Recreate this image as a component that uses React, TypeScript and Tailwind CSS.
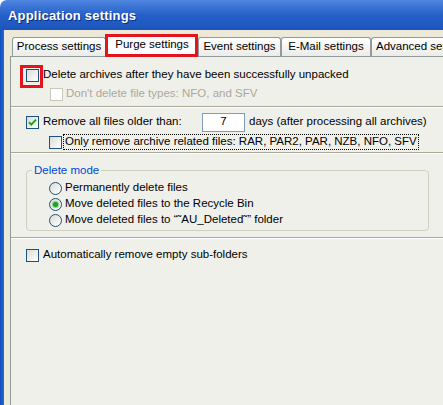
import React from "react";

function Checkbox({ checked = false, disabled = false }: { checked?: boolean; disabled?: boolean }) {
  return (
    <div
      className={
        "w-[13px] h-[13px] shrink-0 border relative " +
        (disabled
          ? "border-[#CAC8BB] bg-white"
          : "border-[#1C5180] bg-gradient-to-br from-[#DCDCD7] to-[#FFFFFF]")
      }
    >
      {checked && (
        <svg className="absolute left-[1px] top-[1px]" width="9" height="9" viewBox="0 0 9 9">
          <path d="M1 4.2 L3.3 6.6 L8 1.6" stroke="#21A121" strokeWidth="2" fill="none" />
        </svg>
      )}
    </div>
  );
}

function Radio({ checked = false }: { checked?: boolean }) {
  return (
    <div className="w-[13px] h-[13px] shrink-0 rounded-full border border-[#1C5180] bg-gradient-to-br from-[#DCDCD7] to-white flex items-center justify-center">
      {checked && <div className="w-[5px] h-[5px] rounded-full bg-[#21A121] shadow-[0_0_1px_1px_#7FD07F]" />}
    </div>
  );
}

function Separator() {
  return <div className="h-[2px] border-t border-[#ACA899] border-b border-b-white" />;
}

function Tab({ label, w, selected = false }: { label: string; w: string; selected?: boolean }) {
  if (selected) {
    return (
      <div className={"relative z-10 h-[23px] -mb-px border border-b-0 border-[#919B9C] rounded-t-[3px] bg-[#FCFCFE] flex items-center justify-center " + w}>
        <span className="-mt-[2px]">{label}</span>
        <div className="absolute -left-[2px] -top-[1px] -right-[1px] h-[23px] border-[3px] border-[#E5131B]" />
      </div>
    );
  }
  return (
    <div className={"h-[19px] border border-b-0 border-[#919B9C] rounded-t-[3px] bg-gradient-to-b from-white to-[#ECEBE6] flex items-center justify-center " + w}>
      <span>{label}</span>
    </div>
  );
}

export default function App() {
  return (
    <div className="w-[443px] h-[405px] overflow-hidden bg-white font-['Liberation_Sans',sans-serif] text-[11.5px] text-black leading-none">
      <div className="w-[540px] h-[405px] flex flex-col">
        {/* Title bar */}
        <div className="h-[30px] shrink-0 rounded-tl-[7px] bg-gradient-to-b from-[#4F86E0] via-[#2560C8] to-[#1B55BC] flex items-center pl-[8px]">
          <span className="text-white font-bold text-[13px] tracking-[0.2px] [text-shadow:1px_1px_0_#0A2E80]">
            Application settings
          </span>
        </div>
        <div className="flex-1 flex">
          {/* Left frame */}
          <div className="w-[4px] bg-gradient-to-r from-[#0D4FBE] to-[#2A68D0]" />
          <div className="flex-1 bg-[#ECE9D8] pl-[6px] pt-[4px] flex flex-col">
            {/* Tabs */}
            <div className="h-[22px] flex items-end pl-[2px]">
              <Tab label="Process settings" w="w-[94px]" />
              <Tab label="Purge settings" w="w-[92px]" selected />
              <Tab label="Event settings" w="w-[83px]" />
              <Tab label="E-Mail settings" w="w-[90px]" />
              <Tab label="Advanced settings" w="w-[104px]" />
            </div>
            {/* Panel */}
            <div className="flex-1 border-l border-t border-[#919B9C] bg-[#F0F0EB] flex flex-col">
              <div className="mt-[9px] h-[18px] flex items-center pl-[15px]">
                <div className="relative">
                  <Checkbox />
                  <div className="absolute -left-[6px] -top-[4px] w-[23px] h-[23px] border-[3px] border-[#E5131B]" />
                </div>
                <span className="ml-[4px]">Delete archives after they have been successfully unpacked</span>
              </div>
              <div className="mt-[1px] h-[18px] flex items-center pl-[39px]">
                <Checkbox disabled />
                <span className="ml-[3px] text-[#ACA899]">Don't delete file types: NFO, and SFV</span>
              </div>
              <div className="mt-[3px]">
                <Separator />
              </div>
              <div className="mt-[4px] h-[20px] flex items-center pl-[15px]">
                <Checkbox checked />
                <span className="ml-[4px] w-[159px]">Remove all files older than:</span>
                <div className="w-[43px] h-[19px] border border-[#7F9DB9] bg-white flex items-center justify-center">7</div>
                <span className="ml-[4px]">days (after processing all archives)</span>
              </div>
              <div className="mt-[2px] h-[16px] flex items-center pl-[38px]">
                <Checkbox />
                <span className="ml-[1px] border border-dotted border-black px-[1px] h-[16px] flex items-center">
                  Only remove archive related files: RAR, PAR2, PAR, NZB, NFO, SFV
                </span>
              </div>
              <div className="mt-[2px]">
                <Separator />
              </div>
              <div className="mt-[16px] ml-[15px] w-[403px] relative border border-[#D0D0BF] rounded-[4px] pt-[9px] pb-[2px] pl-[22px]">
                <span className="absolute left-[5px] -top-[6px] bg-[#F0F0EB] px-[2px] text-[#0046D5]">Delete mode</span>
                <div className="h-[16px] flex items-center">
                  <Radio />
                  <span className="ml-[3px]">Permanently delete files</span>
                </div>
                <div className="h-[16px] flex items-center">
                  <Radio checked />
                  <span className="ml-[3px]">Move deleted files to the Recycle Bin</span>
                </div>
                <div className="h-[16px] flex items-center">
                  <Radio />
                  <span className="ml-[3px]">Move deleted files to “˜AU_Deleted˜” folder</span>
                </div>
              </div>
              <div className="mt-[6px]">
                <Separator />
              </div>
              <div className="mt-[8px] h-[16px] flex items-center pl-[15px]">
                <Checkbox />
                <span className="ml-[4px]">Automatically remove empty sub-folders</span>
              </div>
            </div>
          </div>
        </div>
      </div>
    </div>
  );
}
